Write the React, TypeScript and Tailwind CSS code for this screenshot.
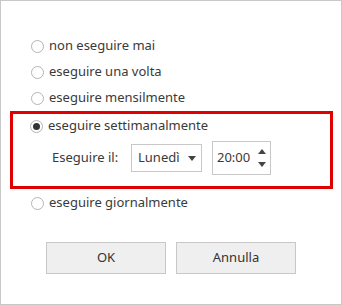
import React, { useState } from 'react';

const options = [
  { id: 'never', label: 'non eseguire mai' },
  { id: 'once', label: 'eseguire una volta' },
  { id: 'monthly', label: 'eseguire mensilmente' },
  { id: 'weekly', label: 'eseguire settimanalmente' },
  { id: 'daily', label: 'eseguire giornalmente' },
];

const Radio: React.FC<{ checked: boolean; label: string; onClick: () => void }> = ({ checked, label, onClick }) => (
  <button onClick={onClick} className="flex items-center gap-[5px] h-full text-left">
    <span className="w-[13px] h-[13px] rounded-full border border-[#b4b4b4] bg-white flex items-center justify-center">
      {checked && <span className="w-[7px] h-[7px] rounded-full bg-[#333]" />}
    </span>
    <span>{label}</span>
  </button>
);

const Triangle: React.FC<{ down?: boolean }> = ({ down }) => (
  <svg width="8" height="5" viewBox="0 0 8 5" className="block">
    <path d={down ? 'M0 0H8L4 5Z' : 'M0 5H8L4 0Z'} fill="#444" />
  </svg>
);

export default function App() {
  const [mode, setMode] = useState('weekly');

  return (
    <div
      className="w-[342px] h-[305px] border border-[#c8c8c8] bg-white text-[13px] text-[#3a3a3a] pt-[32px]"
      style={{ fontFamily: '"Noto Sans", "Open Sans", sans-serif' }}
    >
      {options.slice(0, 3).map((o) => (
        <div key={o.id} className="h-[26px] pl-[30px]">
          <Radio checked={mode === o.id} label={o.label} onClick={() => setMode(o.id)} />
        </div>
      ))}

      <div className="ml-[9px] w-[323px] h-[78px] border-[3px] border-[#e00000] pl-[17px]">
        <div className="h-[24px]">
          <Radio checked={mode === 'weekly'} label="eseguire settimanalmente" onClick={() => setMode('weekly')} />
        </div>
        <div className="mt-[3px] h-[34px] flex items-center">
          <span className="ml-[22px] w-[79px]">Eseguire il:</span>
          <div className="w-[71px] h-[28px] border border-[#c8c8c8] flex items-center justify-between pl-[6px] pr-[5px]">
            <span>Lunedì</span>
            <Triangle down />
          </div>
          <div className="ml-[10px] w-[59px] h-[34px] border border-[#c8c8c8] flex items-center justify-between pl-[4px] pr-[4px]">
            <span>20:00</span>
            <div className="flex flex-col gap-[8px]">
              <Triangle />
              <Triangle down />
            </div>
          </div>
        </div>
      </div>

      <div className="h-[26px] mt-[1px] pl-[30px]">
        <Radio checked={mode === 'daily'} label="eseguire giornalmente" onClick={() => setMode('daily')} />
      </div>

      <div className="mt-[26px] flex gap-[10px] pl-[45px]">
        <button className="w-[120px] h-[32px] bg-[#efefef] border border-[#c8c8c8] text-[#333]">OK</button>
        <button className="w-[120px] h-[32px] bg-[#efefef] border border-[#c8c8c8] text-[#333]">Annulla</button>
      </div>
    </div>
  );
}
